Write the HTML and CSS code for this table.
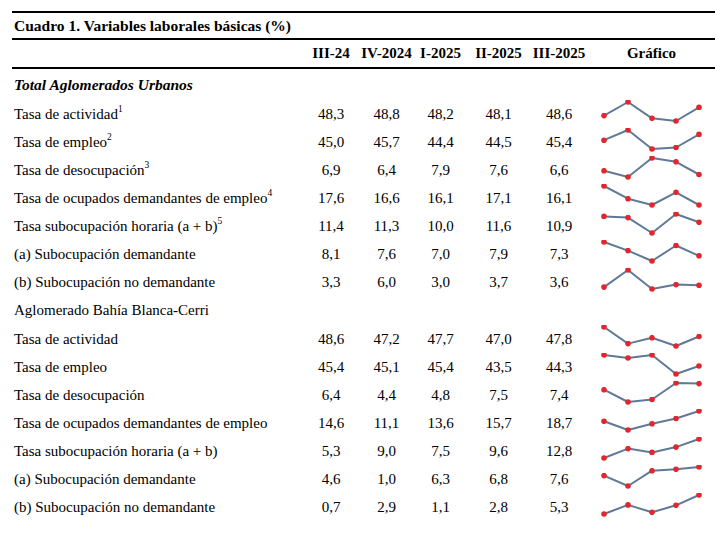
FILE: index.html
```html
<!DOCTYPE html>
<html lang="es">
<head>
<meta charset="utf-8">
<title>Cuadro 1. Variables laborales básicas (%)</title>
<link rel="stylesheet" href="styles.css">
</head>
<body>
<svg class="defs" width="0" height="0" aria-hidden="true">
  <defs>
    <marker id="dot" viewBox="0 0 6 6" refX="3" refY="3" markerWidth="6" markerHeight="6" markerUnits="userSpaceOnUse">
      <circle cx="3" cy="3" r="2.8" fill="#e3262b"/>
    </marker>
  </defs>
</svg>
<div class="table">
  <div class="title">Cuadro 1. Variables laborales básicas (%)</div>
  <div class="grid head">
    <div></div>
    <div class="num">III-24</div>
    <div class="num">IV-2024</div>
    <div class="num">I-2025</div>
    <div class="num">II-2025</div>
    <div class="num">III-2025</div>
    <div class="num">Gráfico</div>
  </div>
  <div class="group group-first"><em>Total Aglomerados Urbanos</em></div>

  <div class="grid row">
    <div class="label">Tasa de actividad<sup>1</sup></div>
    <div class="num">48,3</div><div class="num">48,8</div><div class="num">48,2</div><div class="num">48,1</div><div class="num">48,6</div>
    <svg class="spark" viewBox="0 0 127 28"><polyline points="16,15.6 40,2 64,18.3 88,21 111,7.4"/></svg>
  </div>
  <div class="grid row">
    <div class="label">Tasa de empleo<sup>2</sup></div>
    <div class="num">45,0</div><div class="num">45,7</div><div class="num">44,4</div><div class="num">44,5</div><div class="num">45,4</div>
    <svg class="spark" viewBox="0 0 127 28"><polyline points="16,12.2 40,2 64,21 88,19.5 111,6.4"/></svg>
  </div>
  <div class="grid row">
    <div class="label">Tasa de desocupación<sup>3</sup></div>
    <div class="num">6,9</div><div class="num">6,4</div><div class="num">7,9</div><div class="num">7,6</div><div class="num">6,6</div>
    <svg class="spark" viewBox="0 0 127 28"><polyline points="16,14.7 40,21 64,2 88,5.8 111,18.5"/></svg>
  </div>
  <div class="grid row">
    <div class="label">Tasa de ocupados demandantes de empleo<sup>4</sup></div>
    <div class="num">17,6</div><div class="num">16,6</div><div class="num">16,1</div><div class="num">17,1</div><div class="num">16,1</div>
    <svg class="spark" viewBox="0 0 127 28"><polyline points="16,2 40,14.7 64,21 88,8.3 111,21"/></svg>
  </div>
  <div class="grid row">
    <div class="label">Tasa subocupación horaria (a + b)<sup>5</sup></div>
    <div class="num">11,4</div><div class="num">11,3</div><div class="num">10,0</div><div class="num">11,6</div><div class="num">10,9</div>
    <svg class="spark" viewBox="0 0 127 28"><polyline points="16,4.4 40,5.6 64,21 88,2 111,10.3"/></svg>
  </div>
  <div class="grid row">
    <div class="label">(a) Subocupación demandante</div>
    <div class="num">8,1</div><div class="num">7,6</div><div class="num">7,0</div><div class="num">7,9</div><div class="num">7,3</div>
    <svg class="spark" viewBox="0 0 127 28"><polyline points="16,2 40,10.6 64,21 88,5.5 111,15.8"/></svg>
  </div>
  <div class="grid row">
    <div class="label">(b) Subocupación no demandante</div>
    <div class="num">3,3</div><div class="num">6,0</div><div class="num">3,0</div><div class="num">3,7</div><div class="num">3,6</div>
    <svg class="spark" viewBox="0 0 127 28"><polyline points="16,19.1 40,2 64,21 88,16.6 111,17.2"/></svg>
  </div>

  <div class="group group-second">Aglomerado Bahía Blanca-Cerri</div>

  <div class="grid row">
    <div class="label">Tasa de actividad</div>
    <div class="num">48,6</div><div class="num">47,2</div><div class="num">47,7</div><div class="num">47,0</div><div class="num">47,8</div>
    <svg class="spark" viewBox="0 0 127 28"><polyline points="16,2 40,18.6 64,12.7 88,21 111,11.5"/></svg>
  </div>
  <div class="grid row">
    <div class="label">Tasa de empleo</div>
    <div class="num">45,4</div><div class="num">45,1</div><div class="num">45,4</div><div class="num">43,5</div><div class="num">44,3</div>
    <svg class="spark" viewBox="0 0 127 28"><polyline points="16,2 40,5 64,2 88,21 111,13"/></svg>
  </div>
  <div class="grid row">
    <div class="label">Tasa de desocupación</div>
    <div class="num">6,4</div><div class="num">4,4</div><div class="num">4,8</div><div class="num">7,5</div><div class="num">7,4</div>
    <svg class="spark" viewBox="0 0 127 28"><polyline points="16,8.7 40,21 64,18.5 88,2 111,2.6"/></svg>
  </div>
  <div class="grid row">
    <div class="label">Tasa de ocupados demandantes de empleo</div>
    <div class="num">14,6</div><div class="num">11,1</div><div class="num">13,6</div><div class="num">15,7</div><div class="num">18,7</div>
    <svg class="spark" viewBox="0 0 127 28"><polyline points="16,12.3 40,21 64,14.8 88,9.5 111,2"/></svg>
  </div>
  <div class="grid row">
    <div class="label">Tasa subocupación horaria (a + b)</div>
    <div class="num">5,3</div><div class="num">9,0</div><div class="num">7,5</div><div class="num">9,6</div><div class="num">12,8</div>
    <svg class="spark" viewBox="0 0 127 28"><polyline points="16,21 40,11.6 64,15.4 88,10.1 111,2"/></svg>
  </div>
  <div class="grid row">
    <div class="label">(a) Subocupación demandante</div>
    <div class="num">4,6</div><div class="num">1,0</div><div class="num">6,3</div><div class="num">6,8</div><div class="num">7,6</div>
    <svg class="spark" viewBox="0 0 127 28"><polyline points="16,10.6 40,21 64,5.7 88,4.3 111,2"/></svg>
  </div>
  <div class="grid row">
    <div class="label">(b) Subocupación no demandante</div>
    <div class="num">0,7</div><div class="num">2,9</div><div class="num">1,1</div><div class="num">2,8</div><div class="num">5,3</div>
    <svg class="spark" viewBox="0 0 127 28"><polyline points="16,21 40,11.9 64,19.3 88,12.3 111,2"/></svg>
  </div>
</div>
</body>
</html>
```

FILE: styles.css
```css
html, body {
  margin: 0;
  padding: 0;
  background: #ffffff;
}

body {
  font-family: "Liberation Serif", "Times New Roman", serif;
  font-size: 15px;
  color: #000000;
}

.defs {
  display: block;
  width: 0;
  height: 0;
  overflow: hidden;
}

.table {
  margin: 11px 2px 0 12px;
  width: 703px;
}

.title {
  border-top: 2px solid #000;
  border-bottom: 2px solid #000;
  height: 25px;
  line-height: 25px;
  padding-left: 2px;
  font-size: 15.5px;
  font-weight: bold;
}

.grid {
  display: grid;
  grid-template-columns: 291px 56px 55px 53px 63px 58px 127px;
  align-items: center;
}

.head {
  height: 27px;
  border-bottom: 2px solid #000;
  font-weight: bold;
}

.num {
  text-align: center;
  white-space: nowrap;
}

.group {
  padding-left: 2px;
  display: flex;
  align-items: center;
}

.group-first {
  height: 31px;
  font-size: 15.5px;
  font-weight: bold;
}

.group-first em {
  font-style: italic;
}

.group-second {
  height: 29px;
}

.row {
  height: 28px;
}

.label {
  padding-left: 2px;
  white-space: nowrap;
}

.label sup {
  font-size: 9.5px;
  line-height: 0;
  vertical-align: 7px;
}

.spark {
  display: block;
  width: 127px;
  height: 28px;
}

.spark polyline {
  fill: none;
  stroke: #5e7a98;
  stroke-width: 2;
  stroke-linejoin: round;
  marker-start: url(#dot);
  marker-mid: url(#dot);
  marker-end: url(#dot);
}
```
